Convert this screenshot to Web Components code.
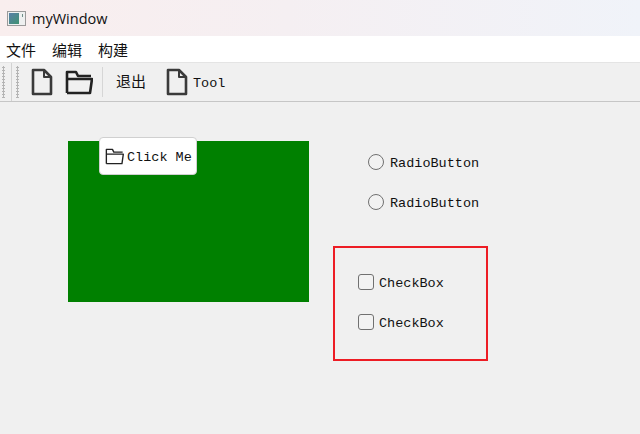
<!DOCTYPE html>
<html>
<head>
<meta charset="utf-8">
<style>
  html, body { margin: 0; padding: 0; background: #f0f0f0; }
  body { width: 640px; height: 434px; overflow: hidden; display: flex; flex-direction: column; }
</style>
</head>
<body>
<my-titlebar>myWindow</my-titlebar>
<my-menubar></my-menubar>
<my-toolbar></my-toolbar>
<my-canvas></my-canvas>
<script>
const DOC_ICON = `<svg width="22" height="28" viewBox="0 0 22 28" fill="none" stroke="#3a3a3a" stroke-width="2.6" stroke-linejoin="round">
  <path d="M2 2H13L20 9V26H2Z"/><path d="M13 2V9H20" stroke-width="2"/></svg>`;
const FOLDER_ICON = `<svg width="28" height="25" viewBox="0 0 28 25" fill="none" stroke="#222" stroke-width="2.6" stroke-linejoin="round">
  <path d="M2 23V2H11L13 6H26"/><path d="M2 9H27L25 23H2"/></svg>`;
const MONO = `"Liberation Mono", "Noto Sans CJK SC", monospace`;

class MyTitlebar extends HTMLElement {
    constructor() {
        super();
        this.attachShadow({ mode: 'open' });
        this.shadowRoot.innerHTML = `<style>
            :host { display: flex; align-items: center; height: 36px; flex: none; padding-left: 7px; gap: 6px;
                background: linear-gradient(90deg, #f9eeee, #f5eff2 45%, #f0f3f9); color: #111;
                font: 14.5px "Open Sans", "Liberation Sans", sans-serif; }
            .ico { width: 17px; height: 13px; border: 1px solid #9a9a9a; background: #eef0f0; display: flex; position: relative; }
            .ico i { display: block; width: 10px; background: linear-gradient(135deg, #5a7fa8, #3f9272); margin: 1px; }
            .ico b { position: absolute; left: 14px; top: 2px; width: 1px; height: 3px; background: #6f8f88; }
        </style><span class="ico"><i></i><b></b></span><slot></slot>`;
    }
}

class MyMenubar extends HTMLElement {
    constructor() {
        super();
        this.attachShadow({ mode: 'open' });
        const items = ['文件', '编辑', '构建'];
        this.shadowRoot.innerHTML = `<style>
            :host { display: flex; height: 26px; flex: none; align-items: center; background: #fff; padding-left: 6px; gap: 16px;
                color: #111; font: 15px "Noto Sans CJK SC", sans-serif; }
        </style>${items.map(m => `<span>${m}</span>`).join('')}`;
    }
}

class MyToolbar extends HTMLElement {
    constructor() {
        super();
        this.attachShadow({ mode: 'open' });
        this.shadowRoot.innerHTML = `<style>
            :host { display: flex; align-items: center; height: 40px; flex: none; box-sizing: border-box; background: #f0f0f0;
                border-top: 1px solid #e4e4e4; border-bottom: 1px solid #c6c6c6; padding-left: 2px; color: #111; }
            .grip { width: 3px; height: 32px; background: radial-gradient(circle at 1.5px 1.5px, #b4b4b4 1.1px, transparent 1.3px) 0 0 / 3px 3px; flex: none; }
            .line { width: 1px; align-self: stretch; background: #d2d2d2; margin: 0 4px 0 6px; flex: none; }
            .doc1 { margin-left: 12px; display: flex; }
            .folder { margin-left: 12px; display: flex; }
            .sep { width: 1px; height: 30px; background: #d6d6d6; margin-left: 9px; flex: none; }
            .quit { margin-left: 13px; margin-top: -3px; font: 15px "Noto Sans CJK SC", sans-serif; }
            .doc2 { margin-left: 20px; display: flex; }
            .tool { margin-left: 5px; padding-top: 3px; font: 13.5px ${MONO}; }
        </style>
        <span class="grip"></span><span class="line"></span><span class="grip"></span>
        <span class="doc1">${DOC_ICON}</span>
        <span class="folder">${FOLDER_ICON}</span>
        <span class="sep"></span>
        <span class="quit">退出</span>
        <span class="doc2">${DOC_ICON}</span>
        <span class="tool">Tool</span>`;
    }
}

class MyClickButton extends HTMLElement {
    constructor() {
        super();
        this.attachShadow({ mode: 'open' });
        this.shadowRoot.innerHTML = `<style>
            :host { position: absolute; left: 31px; top: -4px; width: 98px; height: 38px; box-sizing: border-box;
                display: flex; align-items: center; gap: 3px; padding-left: 5px; background: #fff;
                border: 1px solid #d0d0d0; border-radius: 4px; color: #111; font: 13.5px ${MONO}; white-space: pre; }
            svg { width: 19px; height: 17px; flex: none; }
            slot { display: block; padding-top: 2px; }
        </style>${FOLDER_ICON.replace('stroke-width="2.6"', 'stroke-width="2"')}<slot></slot>`;
    }
}

class MyRadio extends HTMLElement {
    constructor() {
        super();
        this.attachShadow({ mode: 'open' });
        this.shadowRoot.innerHTML = `<style>
            :host { display: flex; align-items: center; gap: 6px; height: 20px; color: #111; font: 13.5px ${MONO}; }
            i { width: 16px; height: 16px; box-sizing: border-box; border: 1.3px solid #707070; border-radius: 50%; background: #f2f2f2; flex: none; }
            slot { display: block; padding-top: 2px; }
        </style><i></i><slot></slot>`;
    }
}

class MyCheck extends HTMLElement {
    constructor() {
        super();
        this.attachShadow({ mode: 'open' });
        this.shadowRoot.innerHTML = `<style>
            :host { display: flex; align-items: center; gap: 5px; height: 20px; color: #111; font: 13.5px ${MONO}; }
            i { width: 16px; height: 16px; box-sizing: border-box; border: 1.3px solid #707070; border-radius: 3px; background: #f2f2f2; flex: none; }
            slot { display: block; padding-top: 2px; }
        </style><i></i><slot></slot>`;
    }
}

class MyCanvas extends HTMLElement {
    constructor() {
        super();
        this.attachShadow({ mode: 'open' });
        this.shadowRoot.innerHTML = `<style>
            :host { display: flex; flex: 1; align-items: flex-start; background: #f0f0f0; padding: 39px 0 0 68px; gap: 24px; }
            .green { position: relative; width: 241px; height: 161px; background: #008000; flex: none; }
            .right { display: flex; flex-direction: column; margin-top: 11px; }
            .radios { display: flex; flex-direction: column; gap: 20px; margin-left: 35px; }
            .frame { display: flex; flex-direction: column; gap: 20px; box-sizing: border-box; width: 155px; height: 115px;
                margin-top: 34px; padding: 24px 0 0 23px; border: 2px solid #ed1c24; }
        </style>
        <div class="green"><my-click-button>Click Me</my-click-button></div>
        <div class="right">
            <div class="radios"><my-radio>RadioButton</my-radio><my-radio>RadioButton</my-radio></div>
            <div class="frame"><my-check>CheckBox</my-check><my-check>CheckBox</my-check></div>
        </div>`;
    }
}

customElements.define('my-titlebar', MyTitlebar);
customElements.define('my-menubar', MyMenubar);
customElements.define('my-toolbar', MyToolbar);
customElements.define('my-click-button', MyClickButton);
customElements.define('my-radio', MyRadio);
customElements.define('my-check', MyCheck);
customElements.define('my-canvas', MyCanvas);
</script>
</body>
</html>
